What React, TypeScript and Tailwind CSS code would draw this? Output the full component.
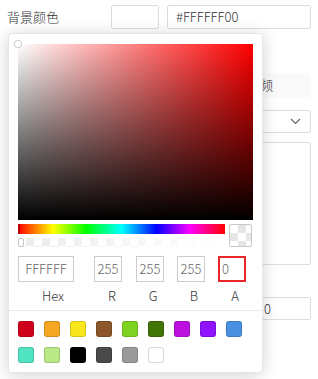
import React from 'react';

const PRESETS = [
  '#D0021B', '#F5A623', '#F8E71C', '#8B572A', '#7ED321', '#417505', '#BD10E0', '#9013FE', '#4A90E2',
  '#50E3C2', '#B8E986', '#000000', '#4A4A4A', '#9B9B9B', '#FFFFFF',
];

const FONT = "font-['Noto_Sans_CJK_SC','Liberation_Sans',sans-serif]";

function ColorPicker() {
  return (
    <div className="absolute left-[8px] top-[33px] w-[255px] h-[340px] bg-white border border-[#e6e6e6] rounded-[4px] shadow-[0_2px_16px_rgba(0,0,0,0.18)] px-[9px] pt-[10px] pb-[9px] flex flex-col">
      {/* saturation */}
      <div className="relative h-[176px] w-full bg-[#ff0000]">
        <div className="absolute inset-0 bg-gradient-to-r from-white to-transparent" />
        <div className="absolute inset-0 bg-gradient-to-t from-black to-transparent" />
        <div className="absolute left-[-3px] top-[-3px] w-[6px] h-[6px] rounded-full border border-white shadow-[0_0_0_1px_rgba(0,0,0,0.2)]" />
      </div>

      {/* hue + alpha + preview */}
      <div className="flex gap-[4px] mt-[4px]">
        <div className="flex flex-col w-[207px]">
          <div className="relative h-[10px] bg-[linear-gradient(to_right,#f00_0%,#ff0_17%,#0f0_33%,#0ff_50%,#00f_67%,#f0f_83%,#f00_100%)]">
            <div className="absolute left-0 top-0 w-[2px] h-[10px] bg-[#c00000]" />
          </div>
          <div className="relative h-[9px] mt-[4px] bg-[conic-gradient(#ececec_25%,#fff_0_50%,#ececec_0_75%,#fff_0)] bg-[length:16px_16px]">
            <div className="absolute inset-0 bg-gradient-to-r from-transparent to-white" />
            <div className="absolute left-0 top-0 w-[6px] h-[9px] rounded-[2px] border border-[#c8c8c8] bg-white/70" />
          </div>
        </div>
        <div className="w-[23px] h-[23px] rounded-[2px] border border-[#c8c8c8] bg-[conic-gradient(#e6e6e6_25%,#fff_0_50%,#e6e6e6_0_75%,#fff_0)] bg-[length:16px_16px]" />
      </div>

      {/* inputs */}
      <div className="flex mt-[9px] text-[13px] font-light text-[#666]">
        <div className="w-[56px] h-[26px] border border-[#ccc] flex items-center justify-center">FFFFFF</div>
        <div className="w-[28px] h-[26px] ml-[20px] border border-[#ccc] flex items-center justify-center">255</div>
        <div className="w-[28px] h-[26px] ml-[14px] border border-[#ccc] flex items-center justify-center">255</div>
        <div className="w-[28px] h-[26px] ml-[13px] border border-[#ccc] flex items-center justify-center">255</div>
        <div className="w-[28px] h-[26px] ml-[13px] border-2 border-[#e8262b] flex items-center pl-[2px]">0</div>
      </div>
      <div className="flex mt-[6px] h-[16px] leading-[16px] text-[13px] font-light text-[#333]">
        <div className="w-[30px] ml-[20px] text-center">Hex</div>
        <div className="w-[20px] ml-[34px] text-center">R</div>
        <div className="w-[20px] ml-[21px] text-center">G</div>
        <div className="w-[20px] ml-[21px] text-center">B</div>
        <div className="w-[20px] ml-[21px] text-center">A</div>
      </div>

      <div className="-mx-[9px] mt-[6px] h-px bg-[#eaeaea]" />

      {/* presets */}
      <div className="grid grid-cols-[repeat(9,16px)] gap-[10px] mt-[10px]">
        {PRESETS.map((c) => (
          <div
            key={c}
            className="w-[16px] h-[16px] rounded-[3px] shadow-[inset_0_0_0_1px_rgba(0,0,0,0.15)]"
            style={{ backgroundColor: c }}
          />
        ))}
      </div>
    </div>
  );
}

export default function App() {
  return (
    <div className={`relative w-[318px] h-[379px] bg-white overflow-hidden ${FONT}`}>
      <div className="flex flex-col pt-[5px] pl-[7px]">
        <div className="flex items-center">
          <div className="w-[104px] text-[13px] font-light text-[#333]">背景颜色</div>
          <div className="w-[48px] h-[24px] border border-[#ddd] rounded-[2px]" />
          <div className="w-[144px] h-[24px] ml-[8px] border border-[#ddd] rounded-[2px] flex items-center pl-[8px] text-[13px] font-light text-[#333]">
            #FFFFFF00
          </div>
        </div>

        <div className="flex mt-[10px]">
          <div className="w-[160px] pt-[4px] text-[13px] font-light text-[#666]">背景图片</div>
          <div className="flex flex-col w-[144px] mt-[34px]">
            <div className="h-[24px] bg-[#fafafa] flex items-center text-[13px] font-light text-[#333]">
              <span className="ml-[50px]">图片</span>
              <span className="ml-[4px]">视频</span>
            </div>
            <div className="h-[23px] mt-[13px] border border-[#ddd] rounded-[2px] flex items-center justify-end pr-[9px]">
              <svg width="11" height="7" viewBox="0 0 11 7" fill="none">
                <path d="M1 1l4.5 4.5L10 1" stroke="#666" strokeWidth="1.2" />
              </svg>
            </div>
            <div className="h-[123px] mt-[9px] border border-[#ddd] rounded-[2px]" />
            <div className="h-[23px] mt-[32px] border border-[#ddd] rounded-[2px] flex items-center pl-[96px] text-[13px] font-light text-[#333]">
              0
            </div>
          </div>
        </div>
      </div>

      <ColorPicker />
    </div>
  );
}
